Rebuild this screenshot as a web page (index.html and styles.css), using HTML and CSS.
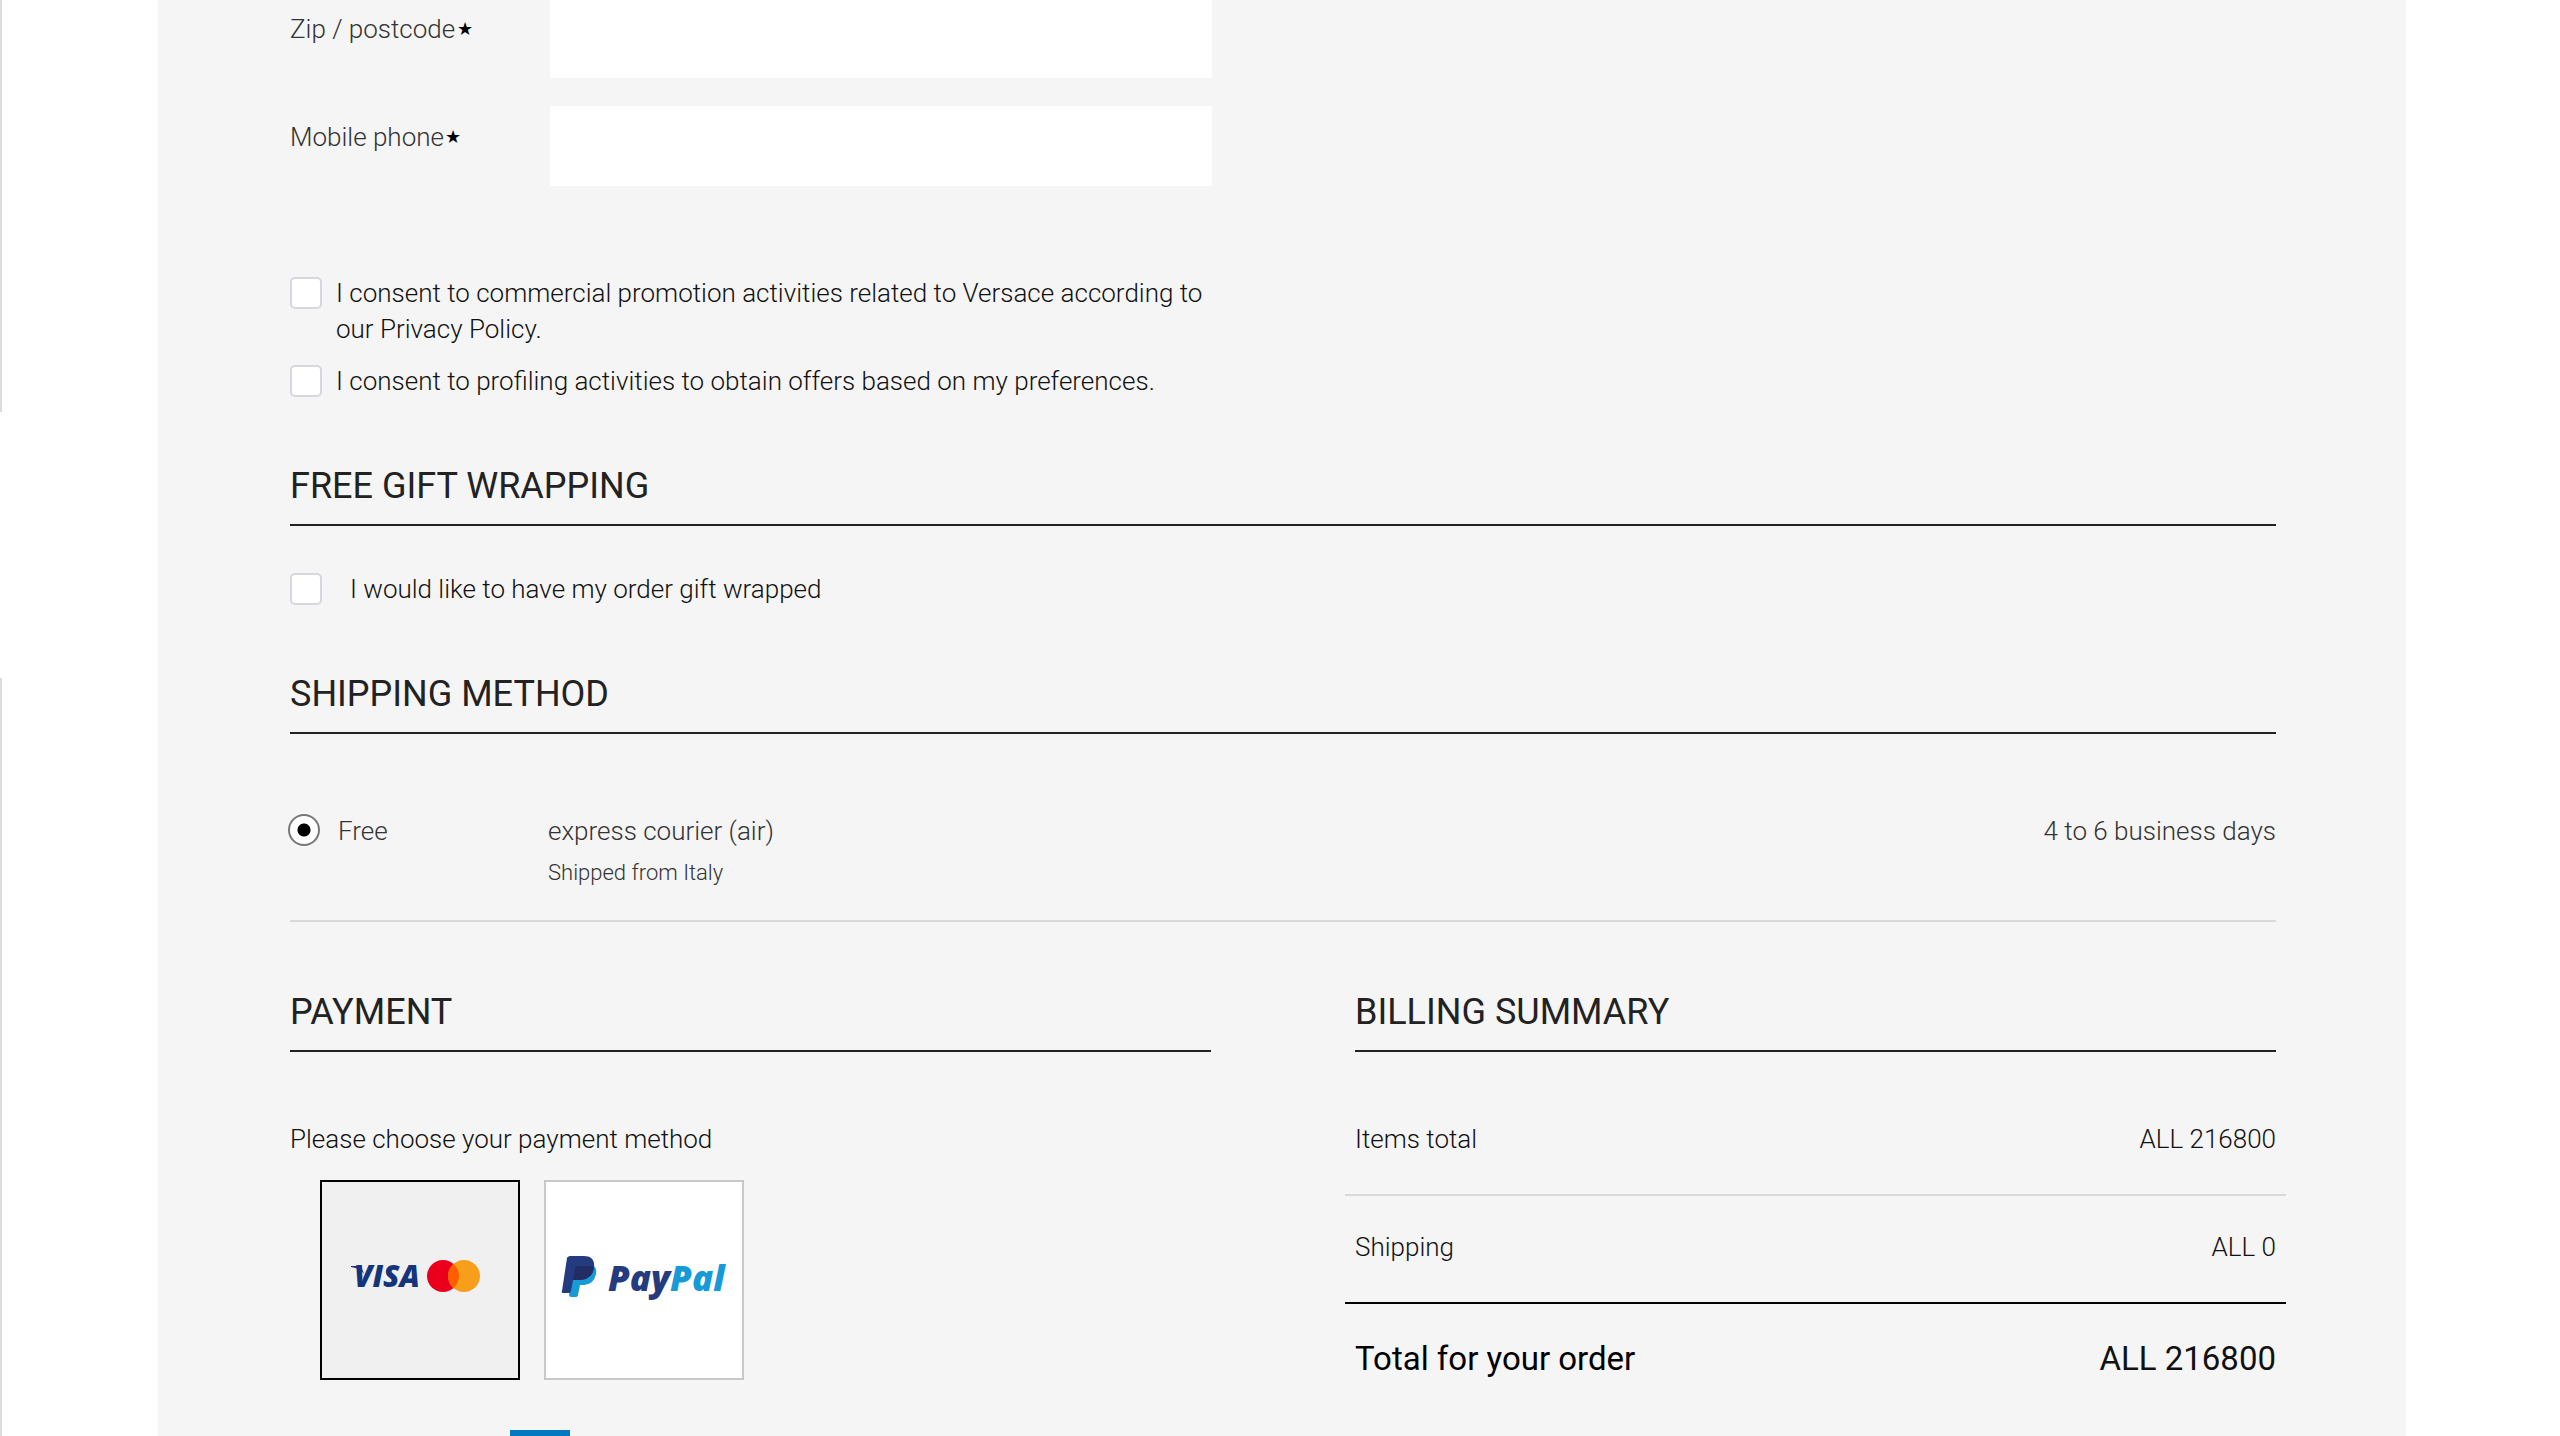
FILE: index.html
```
<!DOCTYPE html>
<html lang="en">
<head>
    <meta charset="UTF-8">
    <meta name="viewport" content="width=device-width, initial-scale=1.0">
    <title>Checkout</title>
    <link rel="stylesheet" href="styles.css">
</head>
<body>
    <div class="rails" aria-hidden="true">
        <div class="rail rail-top"></div>
        <div class="rail rail-bottom"></div>
    </div>

    <main class="checkout">
        <!-- Address -->
        <div class="address">
            <div class="field">
                <label for="zip">Zip / postcode <span class="required">★</span></label>
                <input type="text" id="zip">
            </div>
            <div class="field">
                <label for="mobile">Mobile phone <span class="required">★</span></label>
                <input type="tel" id="mobile">
            </div>
        </div>

        <div class="consents">
            <div class="check-row">
                <input type="checkbox" class="checkbox" id="promo">
                <label for="promo">I consent to commercial promotion activities related to Versace according to our Privacy Policy.</label>
            </div>
            <div class="check-row">
                <input type="checkbox" class="checkbox" id="profiling">
                <label for="profiling">I consent to profiling activities to obtain offers based on my preferences.</label>
            </div>
        </div>

        <section class="section">
            <h2>FREE GIFT WRAPPING</h2>
            <div class="check-row gift">
                <input type="checkbox" class="checkbox" id="gift">
                <label for="gift">I would like to have my order gift wrapped</label>
            </div>
        </section>

        <section class="section">
            <h2>SHIPPING METHOD</h2>
            <div class="shipping-row">
                <div class="shipping-price">
                    <input type="radio" class="radio" name="shipping" id="express" checked>
                    <label for="express">Free</label>
                </div>
                <div class="shipping-name">
                    <p>express courier (air)</p>
                    <p class="shipping-from">Shipped from Italy</p>
                </div>
                <p class="shipping-time">4 to 6 business days</p>
            </div>
        </section>

        <div class="columns">
            <section>
                <h2>PAYMENT</h2>
                <p class="payment-hint">Please choose your payment method</p>
                <div class="tiles">
                    <label class="tile">
                        <input type="radio" class="tile-input" name="payment" aria-label="Visa or Mastercard" checked>
                        <svg class="tile-logo" viewBox="0 0 196 196">
                            <path d="M29 84h10l3 8c-3-4-7-6-13-7z" fill="#14347c"/>
                            <text class="visa" x="32" y="105">VISA</text>
                            <circle cx="121" cy="94" r="16" fill="#eb001b"/>
                            <circle cx="142" cy="94" r="16" fill="#f79e1b"/>
                            <path d="M131.500 81.900a16 16 0 0 1 0 24.200a16 16 0 0 1 0-24.200z" fill="#ff5f00"/>
                        </svg>
                    </label>
                    <label class="tile">
                        <input type="radio" class="tile-input" name="payment" aria-label="PayPal">
                        <svg class="tile-logo" viewBox="0 0 196 196">
                            <path d="M47 83c4 3 4 8 2 12-2 6-7 8-13 8h-2l-2 10c0 1-1 2-2 2h-5c-1 0-2-1-2-2l5-28z" fill="#179bd7"/>
                            <path d="M24 74h14c7 0 11 4 10 11-1 9-7 13-15 13h-6l-2 11c0 1-1 2-2 2h-6c-1 0-2-1-1-2l5-33c0-1 2-2 3-2z" fill="#253b80"/>
                            <path d="M29 86c0-1 1-2 2-2h10c3 0 5 0 7 1-1 9-7 13-15 13h-6z" fill="#222d65"/>
                            <text class="paypal" x="62" y="109">Pay<tspan class="paypal-light">Pal</tspan></text>
                        </svg>
                    </label>
                </div>
                <div class="amex"></div>
            </section>

            <section>
                <h2>BILLING SUMMARY</h2>
                <table class="summary">
                    <tbody>
                        <tr>
                            <th scope="row">Items total</th>
                            <td>ALL 216800</td>
                        </tr>
                        <tr class="shipping-cost">
                            <th scope="row">Shipping</th>
                            <td>ALL 0</td>
                        </tr>
                    </tbody>
                    <tfoot>
                        <tr>
                            <th scope="row">Total for your order</th>
                            <td>ALL 216800</td>
                        </tr>
                    </tfoot>
                </table>
            </section>
        </div>
    </main>
</body>
</html>
```
FILE: styles.css
```
* {
    box-sizing: border-box;
}

body {
    margin: 0;
    height: 100vh;
    overflow: hidden;
    display: flex;
    background: #fff;
    color: #111;
    font-family: Roboto, "Liberation Sans", sans-serif;
    font-size: 26px;
    font-weight: 300;
    line-height: 36px;
}

p {
    margin: 0;
}

input {
    margin: 0;
    font: inherit;
}

/* thin lines on the left edge of the window */
.rails {
    display: flex;
    flex-direction: column;
    gap: 266px;
    flex: 0 0 158px;
}

.rail {
    border-left: 2px solid #ddd;
}

.rail-top {
    height: 412px;
}

.rail-bottom {
    flex: 1;
}

.checkout {
    flex: 1;
    margin-right: 154px;
    padding: 0 130px 0 132px;
    background: #f5f5f5;
}

h2 {
    margin: 0;
    padding-bottom: 16px;
    border-bottom: 2px solid #222;
    color: #222;
    font-size: 36px;
    font-weight: 400;
    line-height: 44px;
}

/* Address */
.address {
    display: grid;
    gap: 28px;
    width: calc(50% - 71px);
    margin-top: -2px;
}

.field {
    display: grid;
    grid-template-columns: 260px 1fr;
}

.field label {
    padding-top: 13px;
    color: #333;
}

.field input {
    height: 80px;
    padding: 0 20px;
    border: none;
    border-radius: 0;
    background: #fff;
}

.required {
    display: inline-block;
    margin-left: -5px;
    color: #000;
    font-family: "DejaVu Sans", sans-serif;
    font-size: 18px;
    vertical-align: 3px;
    line-height: 18px;
}

/* Checkboxes */
.consents {
    display: grid;
    gap: 16px;
    width: calc(50% - 60px);
    margin-top: 89px;
}

.check-row {
    display: flex;
    gap: 14px;
}

.gift {
    gap: 28px;
    margin-top: 45px;
}

.checkbox {
    appearance: none;
    flex: none;
    width: 32px;
    height: 32px;
    margin-top: 2px;
    border: 2px solid #dad5de;
    border-radius: 5px;
    background: #fff;
}

.checkbox:checked {
    background: #222;
}

.section {
    margin-top: 65px;
}

/* Shipping */
.shipping-row {
    display: grid;
    grid-template-columns: 258px 1fr auto;
    margin-top: 79px;
    padding-bottom: 32px;
    border-bottom: 2px solid #d9d9d9;
    color: #333;
}

.shipping-price {
    display: flex;
    align-items: flex-start;
    gap: 18px;
}

.radio {
    appearance: none;
    width: 32px;
    height: 32px;
    margin: 1px 0 0 -2px;
    border: 2px solid #777;
    border-radius: 50%;
    background: #fff;
}

.radio:checked {
    background: radial-gradient(circle, #000 6px, #fff 7px);
}

.shipping-from {
    margin-top: 9px;
    font-size: 22px;
    line-height: 30px;
}

/* Payment and billing */
.columns {
    display: grid;
    grid-template-columns: 1fr 1fr;
    gap: 144px;
    margin-top: 68px;
}

.payment-hint {
    margin-top: 69px;
}

.tiles {
    display: flex;
    gap: 24px;
    margin: 23px 0 0 30px;
}

.tile {
    position: relative;
    width: 200px;
    height: 200px;
    border: 2px solid #c8c8c8;
    background: #fff;
    cursor: pointer;
}

.tile:has(:checked) {
    border-color: #000;
    background: #f0f0f0;
}

.tile-input {
    position: absolute;
    opacity: 0;
}

.tile-logo {
    display: block;
}

.visa {
    fill: #14347c;
    font: italic 800 30px "Open Sans", sans-serif;
}

.paypal {
    fill: #253b80;
    font: italic 800 35px "Open Sans", sans-serif;
}

.paypal-light {
    fill: #179bd7;
}

.amex {
    width: 60px;
    height: 60px;
    margin: 50px 0 0 220px;
    background: #0079c1;
}

.summary {
    width: calc(100% + 20px);
    margin: 36px -10px 0;
    border-collapse: separate;
    border-spacing: 0;
}

.summary th,
.summary td {
    padding: 33px 10px 37px;
    border-bottom: 2px solid #d9d9d9;
    font-weight: 300;
    text-align: left;
}

.summary td {
    text-align: right;
}

.summary .shipping-cost th,
.summary .shipping-cost td {
    border-color: #000;
}

.summary tfoot th,
.summary tfoot td {
    border: none;
    font-size: 33px;
    font-weight: 400;
    line-height: 44px;
}

.summary tfoot th {
    color: #000;
}
```
